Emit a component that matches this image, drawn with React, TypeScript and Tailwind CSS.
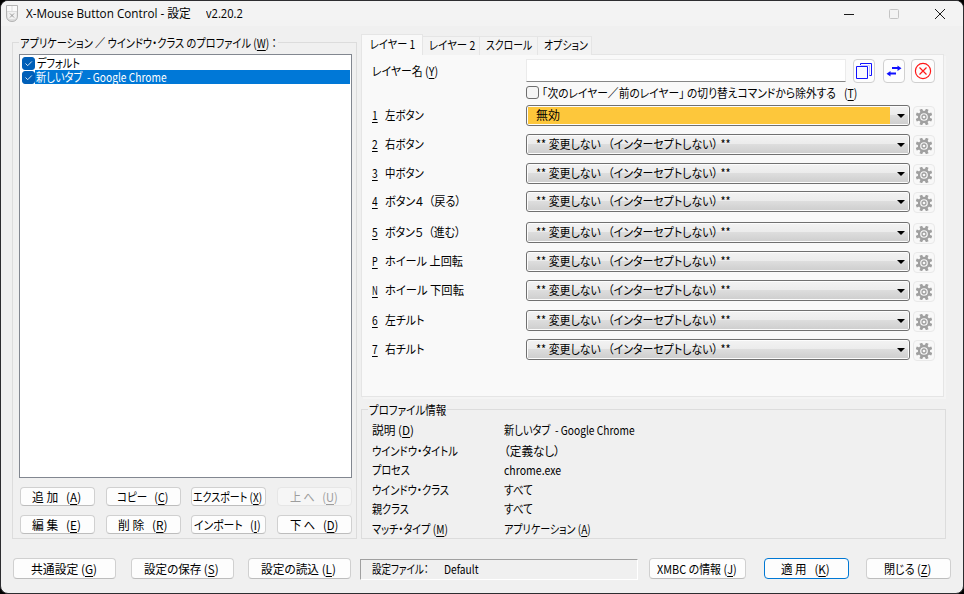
import { useLayoutEffect, useRef, useState, type ReactNode } from 'react';
import clsx from 'clsx';

// Squeezes a run of text to the narrow dialog metrics.
function Fit({
  w,
  className,
  tight,
  children,
}: {
  w: number;
  className?: string;
  tight?: boolean;
  children: ReactNode;
}) {
  const ref = useRef<HTMLSpanElement>(null);
  const [scale, setScale] = useState(1);

  useLayoutEffect(() => {
    if (ref.current?.offsetWidth) setScale(w / ref.current.offsetWidth);
  }, [w]);

  return (
    <span
      className={clsx('block shrink-0 whitespace-pre', tight ? 'h-3.5 leading-3.5' : 'h-4 leading-4', className)}
      style={{ width: w }}
    >
      <span ref={ref} className="inline-block origin-left" style={{ transform: `scaleX(${scale})` }}>
        {children}
      </span>
    </span>
  );
}

function K({ children }: { children: string }) {
  return <span className="underline decoration-1 underline-offset-2">{children}</span>;
}

function Button({
  w,
  text,
  hotkey,
  className,
  primary,
  disabled,
  tall,
}: {
  w: number;
  text: string;
  hotkey: string;
  className: string;
  primary?: boolean;
  disabled?: boolean;
  tall?: boolean;
}) {
  return (
    <button
      className={clsx(
        'flex shrink-0 items-center justify-center rounded-[4px] border',
        tall ? 'h-[21px]' : 'h-[19px]',
        primary && 'border-[#0078d4] bg-[#fdfdfd]',
        disabled && 'border-[#e6e6e6] bg-[#f6f6f6] text-[#9d9d9d]',
        !primary && !disabled && 'border-[#d0d0d0] border-b-[#bdbdbd] bg-[#fdfdfd]',
        className,
      )}
    >
      <Fit w={w} className="-ml-0.5">
        {text}(<K>{hotkey}</K>)
      </Fit>
    </button>
  );
}

function Check({ on }: { on?: boolean }) {
  return (
    <span
      className={clsx(
        'block size-[13px] shrink-0 rounded-[3px] border',
        on ? 'border-[#005fb8] bg-[#005fb8]' : 'border-[#6e6e6e] bg-[#f5f5f5]',
      )}
    >
      {on && (
        <svg viewBox="0 0 11 11" className="block size-[11px]" fill="none" stroke="#d5e5f5">
          <path d="M2.5 5.5 4.7 7.7 8.8 3.5" />
        </svg>
      )}
    </span>
  );
}

function Gear() {
  return (
    <svg viewBox="0 0 16 16" className="size-4 shrink-0" fill="none" stroke="#a0a0a0">
      <circle cx="8" cy="8" r="5" strokeWidth="2.3" />
      <circle cx="8" cy="8" r="2" strokeWidth="1.3" />
      {[22.5, 67.5, 112.5, 157.5, 202.5, 247.5, 292.5, 337.5].map((a) => (
        <path key={a} d="M8-.4V3" strokeWidth="2.9" transform={`rotate(${a} 8 8)`} />
      ))}
    </svg>
  );
}

function MouseIcon() {
  return (
    <svg viewBox="0 0 12 17" className="h-[17px] w-3">
      <path d="M.5.5h11V11c0 3.5-2.2 5.500-5.500 5.500S.5 14.500.5 11z" fill="#dcdcdc" stroke="#b4b4b4" />
      <path d="M1 1h4.500v5H1zM6.500 1H11v5H6.500z" fill="#fafafa" />
      <path d="M1.500 7h9v4.500c0 2-1.800 2.500-4.500 2.500s-4.500-.5-4.500-2.500z" fill="#f1f1f1" />
      <path d="m4 8.500 4 4m0-4-4 4" stroke="#9a9a9a" fill="none" />
    </svg>
  );
}

const NO_CHANGE = '** 変更しない   （インターセプトしない） **';

const rows = [
  { k: '1', label: '左ボタン', w: 39, h: 'h-[29px]', set: '無効' },
  { k: '2', label: '右ボタン', w: 39, h: 'h-[29px]' },
  { k: '3', label: '中ボタン', w: 39, h: 'h-[28px]' },
  { k: '4', label: 'ボタン４  （戻る）', w: 76, h: 'h-[31px]' },
  { k: '5', label: 'ボタン５  （進む）', w: 76, h: 'h-[29px]' },
  { k: 'P', label: 'ホイール 上回転', w: 78, h: 'h-[29px]' },
  { k: 'N', label: 'ホイール 下回転', w: 79, h: 'h-[30px]' },
  { k: '6', label: '左チルト', w: 39, h: 'h-[29px]' },
  { k: '7', label: '右チルト', w: 39, h: 'h-[29px]' },
];

const info = [
  { label: '説明 ', k: 'D', w: 42, value: '新しいタブ  - Google Chrome', vw: 131, h: 'h-[21px]' },
  { label: 'ウインドウ・タイトル', w: 86, value: '（定義なし）', vw: 56, h: 'h-[19px]' },
  { label: 'プロセス', w: 38, value: 'chrome.exe', vw: 57, h: 'h-[20px]' },
  { label: 'ウインドウ・クラス', w: 77, value: 'すべて', vw: 29, h: 'h-[19px]' },
  { label: '親クラス', w: 37, value: 'すべて', vw: 29, h: 'h-[20px]' },
  { label: 'マッチ・タイプ ', k: 'M', w: 76, value: 'アプリケーション ', vk: 'A', vw: 87, h: 'h-[18px]' },
];

function Combo({ set }: { set?: string }) {
  return (
    <div className="flex h-[21px] w-96 shrink-0 rounded-[3px] border border-[#707070] bg-[#fcfcfc] p-px">
      <div className="flex flex-1 items-center bg-[linear-gradient(#f2f2f2_0%,#ebebeb_49%,#dddddd_50%,#cfcfcf_100%)]">
        <div className={clsx('flex h-[17px] w-[362px] items-center pl-2', set && 'bg-[#fdc73b]')}>
          <Fit w={set ? 24 : 195} className="-mt-0.5">
            {set ?? NO_CHANGE}
          </Fit>
        </div>
        <svg viewBox="0 0 8 4" className="ml-[7px] h-1 w-2">
          <path d="M0 0h8L4 4z" fill="#000" />
        </svg>
      </div>
    </div>
  );
}

function ProfilePanel() {
  return (
    <section className="relative mt-4 ml-[11px] h-[497px] w-[345px] shrink-0 border border-[#dcdcdc] pt-[11px] pl-1.5">
      <div className="absolute top-[-8px] left-1.5 bg-[#f0f0f0] px-px">
        <Fit w={257}>
          アプリケーション ／ ウインドウ・クラス のプロファイル (<K>W</K>) ：
        </Fit>
      </div>
      <div className="h-[424px] w-[333px] border border-[#828790] bg-white pt-px">
        <div className="flex h-3.5 items-center pl-0.5">
          <Check on />
          <Fit tight w={43} className="ml-0.5">デフォルト</Fit>
        </div>
        <div className="flex h-3.5 items-center pl-0.5">
          <Check on />
          <div className="mr-px flex h-3.5 flex-1 items-center bg-[#0078d7] pl-px text-white">
            <Fit tight w={131}>新しいタブ  - Google Chrome</Fit>
          </div>
        </div>
      </div>
      <div className="mt-[9px] ml-px grid grid-cols-[86px_85px_86px_75px] gap-y-[9px]">
        <Button w={49} text="追 加   " hotkey="A" className="w-[75px]" />
        <Button w={51} text="コピー   " hotkey="C" className="w-[75px]" />
        <Button w={69} text="エクスポート " hotkey="X" className="w-[75px]" />
        <Button w={48} text="上 へ   " hotkey="U" className="w-[75px]" disabled />
        <Button w={49} text="編 集   " hotkey="E" className="w-[75px]" />
        <Button w={50} text="削 除   " hotkey="R" className="w-[75px]" />
        <Button w={67} text="インポート   " hotkey="I" className="w-[75px]" />
        <Button w={48} text="下 へ   " hotkey="D" className="w-[75px]" />
      </div>
    </section>
  );
}

function LayerPanel() {
  return (
    <div className="-mt-px h-[343px] w-[583px] border border-[#e5e5e5] bg-[#f9f9f9] pl-2.5 shadow-[2px_2px_0_#f4f4f4]">
      <div className="flex h-7 pt-1">
        <Fit w={66} className="mt-1 mr-[88px]">
          レイヤー名 (<K>Y</K>)
        </Fit>
        <div className="h-[23px] w-80 border border-[#ebebeb] border-b-[#868686] bg-white" />
        <div className="ml-[7px] flex h-6 w-[22px] items-center justify-center rounded-[4px] border border-[#d0d0d0] bg-[#fdfdfd]">
          <svg viewBox="0 0 18 18" className="size-[18px] shrink-0" fill="none" stroke="#1010ff">
            <path d="M5.500 3V1.500h11v12H14" />
            <path d="M5.500 3.500h9v10" stroke="#c4c4ff" />
            <path d="M1.500 4.500h11v12h-11z" fill="#f8f8ff" />
          </svg>
        </div>
        <div className="ml-2 flex h-6 w-[22px] items-center justify-center rounded-[4px] border border-[#d0d0d0] bg-[#fdfdfd]">
          <svg viewBox="0 0 16 12" className="h-3 w-4 shrink-0" fill="#1010ff">
            <path d="M6 2h5.500V.5l4 2.700-4 2.800V4H6z" />
            <path d="M10 7.500H4.500V6l-4 2.700 4 2.800V9.500H10z" />
          </svg>
        </div>
        <div className="ml-1.5 flex size-6 items-center justify-center rounded-[4px] border border-[#d0d0d0] bg-[#fdfdfd]">
          <svg viewBox="0 0 18 18" className="size-[18px]" fill="none" stroke="#ff1818" strokeWidth="1.200">
            <circle cx="9" cy="9" r="7.600" />
            <path d="m5.500 5.500 7 7m0-7-7 7" />
          </svg>
        </div>
      </div>
      <div className="mt-[3px] ml-[154px] flex h-[13px] items-center">
        <Check />
        <Fit w={294} className="ml-[3px]">「次のレイヤー／前のレイヤー」 の切り替えコマンドから除外する</Fit>
        <Fit w={13} className="ml-2">
          (<K>T</K>)
        </Fit>
      </div>
      <div className="mt-1.5">
        {rows.map((r) => (
          <div key={r.k} className={clsx('flex items-start', r.h)}>
            <Fit w={6} className="mt-0.5 mr-[7px]">
              <K>{r.k}</K>
            </Fit>
            <div className="w-[141px] shrink-0 pt-0.5">
              <Fit w={r.w}>{r.label}</Fit>
            </div>
            <Combo set={r.set} />
            <div className="mt-px ml-[3px] flex h-[21px] w-[22px] shrink-0 items-center justify-center rounded-[4px] border border-[#e9e9e9] bg-[#f8f8f8]">
              <Gear />
            </div>
          </div>
        ))}
      </div>
    </div>
  );
}

function InfoPanel() {
  return (
    <section className="relative mt-3 h-[130px] w-[585px] border border-[#dcdcdc] pt-3 pl-2.5">
      <div className="absolute top-[-8px] left-1.5 bg-[#f0f0f0] px-px">
        <Fit w={77}>プロファイル情報</Fit>
      </div>
      {info.map((r) => (
        <div key={r.label} className={clsx('flex', r.h)}>
          <div className="w-[132px]">
            <Fit w={r.w}>
              {r.label}
              {r.k && <>(<K>{r.k}</K>)</>}
            </Fit>
          </div>
          <Fit w={r.vw}>
            {r.value}
            {r.vk && <>(<K>{r.vk}</K>)</>}
          </Fit>
        </div>
      ))}
    </section>
  );
}

export default function App() {
  return (
    <div className="h-[594px] w-[964px] overflow-hidden bg-black">
      <div className="flex h-full flex-col overflow-hidden rounded-lg border border-[#2d2d30] bg-[#f0f0f0] font-['Noto_Sans_CJK_JP',sans-serif] text-[12px] text-black [font-feature-settings:'palt']">
        <header className="flex h-[25px] shrink-0 items-center bg-[#f3f3f3] pl-[5px] font-['Open_Sans','Noto_Sans_CJK_JP',sans-serif]">
          <MouseIcon />
          <Fit w={165} className="ml-2">X-Mouse Button Control - 設定</Fit>
          <Fit w={37} className="ml-[15px]">v2.20.2</Fit>
          <div className="ml-auto flex items-center pr-[18px]">
            <svg viewBox="0 0 10 10" className="size-2.5" stroke="#1a1a1a">
              <path d="M0 5.500h10" />
            </svg>
            <svg viewBox="0 0 10 10" className="ml-[35px] size-2.5" fill="none" stroke="#c4c4c4">
              <rect x=".5" y=".5" width="9" height="9" rx="1" />
            </svg>
            <svg viewBox="0 0 10 10" className="ml-9 size-2.5" stroke="#1a1a1a">
              <path d="m0 0 10 10M10 0 0 10" />
            </svg>
          </div>
        </header>

        <main className="flex h-[513px] shrink-0">
          <ProfilePanel />
          <div className="ml-1 pt-2">
            <nav className="flex h-[21px] items-end">
              <div className="z-10 flex h-[21px] w-[62px] items-start border border-b-0 border-[#e5e5e5] bg-[#f9f9f9] pl-2">
                <Fit w={45} className="mt-px">レイヤー 1</Fit>
              </div>
              <div className="flex h-[19px] w-[57px] items-start border-t border-r border-[#e5e5e5] bg-[#f3f3f3] pl-1.5">
                <Fit w={46}>レイヤー 2</Fit>
              </div>
              <div className="flex h-[19px] w-[58px] items-start border-t border-r border-[#e5e5e5] bg-[#f3f3f3] pl-1.5">
                <Fit w={46}>スクロール</Fit>
              </div>
              <div className="flex h-[19px] w-[54px] items-start border-t border-r border-[#e5e5e5] bg-[#f3f3f3] pl-1.5">
                <Fit w={44}>オプション</Fit>
              </div>
            </nav>
            <LayerPanel />
            <InfoPanel />
          </div>
        </main>

        <footer className="flex items-start pt-[19px] pl-3">
          <Button tall w={66} text="共通設定 " hotkey="G" className="w-[103px]" />
          <Button tall w={75} text="設定の保存 " hotkey="S" className="ml-[15px] w-[103px]" />
          <Button tall w={75} text="設定の読込 " hotkey="L" className="ml-3.5 w-[103px]" />
          <div className="mt-px ml-[9px] flex h-[21px] w-[278px] items-start border border-[#a0a0a0] border-r-white border-b-white pt-px pl-[11px]">
            <Fit w={57}>設定ファイル：</Fit>
            <Fit w={35} className="ml-[15px]">Default</Fit>
          </div>
          <Button tall w={80} text="XMBC の情報 " hotkey="J" className="ml-[11px] w-[97px]" />
          <Button tall primary w={49} text="適 用   " hotkey="K" className="ml-[18px] w-[85px]" />
          <Button tall w={47} text="閉じる " hotkey="Z" className="ml-[17px] w-[85px]" />
        </footer>
      </div>
    </div>
  );
}
